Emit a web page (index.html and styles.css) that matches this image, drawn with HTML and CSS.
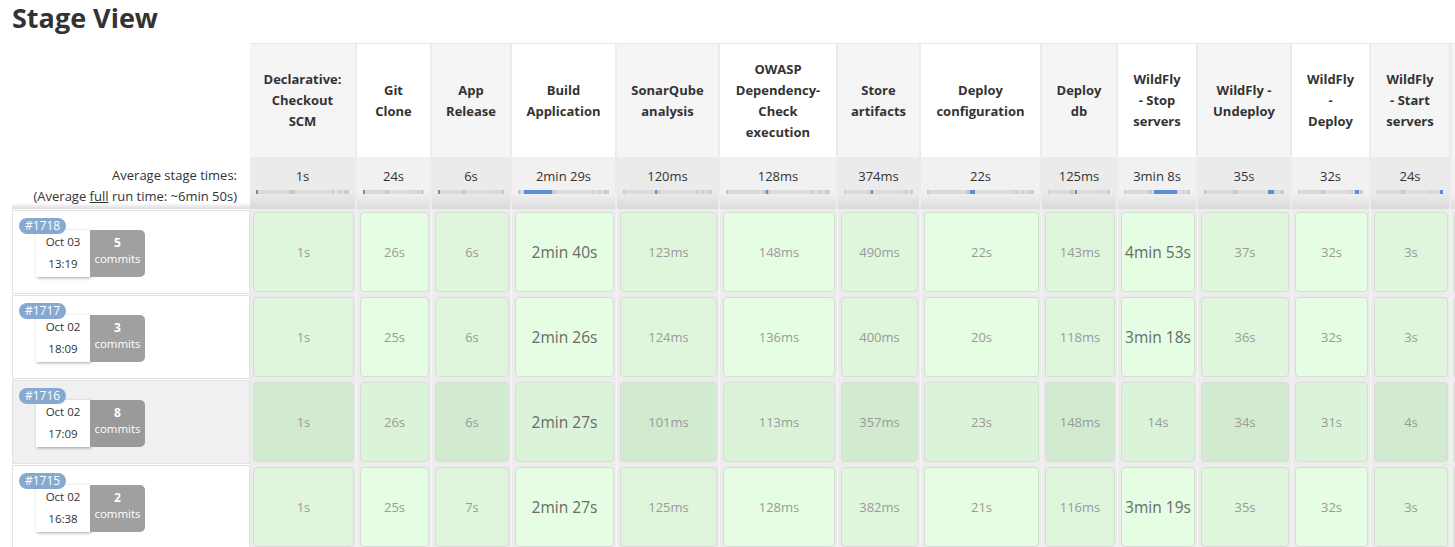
FILE: index.html
```html
<!DOCTYPE html>
<html>
<head>
<meta charset="utf-8">
<title>Stage View</title>
<link rel="stylesheet" href="styles.css">
</head>
<body>
<div class="page">
  <h1 class="title">Stage View</h1>
  <div class="table">
    <div class="row head">
      <div class="lead"></div>
      <div class="sh odd"><span>Declarative:<br>Checkout<br>SCM</span></div>
      <div class="sh even"><span>Git<br>Clone</span></div>
      <div class="sh odd"><span>App<br>Release</span></div>
      <div class="sh even"><span>Build<br>Application</span></div>
      <div class="sh odd"><span>SonarQube<br>analysis</span></div>
      <div class="sh even"><span>OWASP<br>Dependency-<br>Check<br>execution</span></div>
      <div class="sh odd"><span>Store<br>artifacts</span></div>
      <div class="sh even"><span>Deploy<br>configuration</span></div>
      <div class="sh odd"><span>Deploy<br>db</span></div>
      <div class="sh even"><span>WildFly<br>- Stop<br>servers</span></div>
      <div class="sh odd"><span>WildFly -<br>Undeploy</span></div>
      <div class="sh even"><span>WildFly<br>-<br>Deploy</span></div>
      <div class="sh odd"><span>WildFly<br>- Start<br>servers</span></div>
      <div class="sh even edge"></div>
    </div>
    <div class="row avg">
      <div class="lead avg-lead">Average stage times:<br>(Average <a class="full" href="#">full</a> run time: ~6min 50s)</div>
      <div class="av odd"><div class="avt">1s</div><div class="bar"><i style="margin-left:0%;width:1.5%"></i></div></div>
      <div class="av even"><div class="avt">24s</div><div class="bar"><i style="margin-left:0%;width:4%"></i></div></div>
      <div class="av odd"><div class="avt">6s</div><div class="bar"><i style="margin-left:0%;width:1.5%"></i></div></div>
      <div class="av even"><div class="avt">2min 29s</div><div class="bar"><i style="margin-left:7%;width:30%"></i></div></div>
      <div class="av odd"><div class="avt">120ms</div><div class="bar"><i style="margin-left:36%;width:1%"></i></div></div>
      <div class="av even"><div class="avt">128ms</div><div class="bar"><i style="margin-left:38%;width:1%"></i></div></div>
      <div class="av odd"><div class="avt">374ms</div><div class="bar"><i style="margin-left:39%;width:1.5%"></i></div></div>
      <div class="av even"><div class="avt">22s</div><div class="bar"><i style="margin-left:40%;width:5%"></i></div></div>
      <div class="av odd"><div class="avt">125ms</div><div class="bar"><i style="margin-left:43%;width:1%"></i></div></div>
      <div class="av even"><div class="avt">3min 8s</div><div class="bar"><i style="margin-left:46%;width:34%"></i></div></div>
      <div class="av odd"><div class="avt">35s</div><div class="bar"><i style="margin-left:80%;width:7%"></i></div></div>
      <div class="av even"><div class="avt">32s</div><div class="bar"><i style="margin-left:88%;width:6%"></i></div></div>
      <div class="av odd"><div class="avt">24s</div><div class="bar"><i style="margin-left:95%;width:5%"></i></div></div>
      <div class="av even edge"></div>
    </div>

    <div class="row build">
      <div class="lead info">
        <span class="badge">#1718</span>
        <div class="meta">
          <div class="date">Oct 03<br>13:19</div>
          <div class="commits"><b>5</b><br>commits</div>
        </div>
      </div>
      <div class="sc odd"><div class="box">1s</div></div>
      <div class="sc even"><div class="box">26s</div></div>
      <div class="sc odd"><div class="box">6s</div></div>
      <div class="sc even"><div class="box big">2min 40s</div></div>
      <div class="sc odd"><div class="box">123ms</div></div>
      <div class="sc even"><div class="box">148ms</div></div>
      <div class="sc odd"><div class="box">490ms</div></div>
      <div class="sc even"><div class="box">22s</div></div>
      <div class="sc odd"><div class="box">143ms</div></div>
      <div class="sc even"><div class="box big">4min 53s</div></div>
      <div class="sc odd"><div class="box">37s</div></div>
      <div class="sc even"><div class="box">32s</div></div>
      <div class="sc odd"><div class="box">3s</div></div>
      <div class="sc even edge"><div class="box"></div></div>
    </div>

    <div class="row build">
      <div class="lead info">
        <span class="badge">#1717</span>
        <div class="meta">
          <div class="date">Oct 02<br>18:09</div>
          <div class="commits"><b>3</b><br>commits</div>
        </div>
      </div>
      <div class="sc odd"><div class="box">1s</div></div>
      <div class="sc even"><div class="box">25s</div></div>
      <div class="sc odd"><div class="box">6s</div></div>
      <div class="sc even"><div class="box big">2min 26s</div></div>
      <div class="sc odd"><div class="box">124ms</div></div>
      <div class="sc even"><div class="box">136ms</div></div>
      <div class="sc odd"><div class="box">400ms</div></div>
      <div class="sc even"><div class="box">20s</div></div>
      <div class="sc odd"><div class="box">118ms</div></div>
      <div class="sc even"><div class="box big">3min 18s</div></div>
      <div class="sc odd"><div class="box">36s</div></div>
      <div class="sc even"><div class="box">32s</div></div>
      <div class="sc odd"><div class="box">3s</div></div>
      <div class="sc even edge"><div class="box"></div></div>
    </div>

    <div class="row build hot">
      <div class="lead info">
        <span class="badge">#1716</span>
        <div class="meta">
          <div class="date">Oct 02<br>17:09</div>
          <div class="commits"><b>8</b><br>commits</div>
        </div>
      </div>
      <div class="sc odd"><div class="box">1s</div></div>
      <div class="sc even"><div class="box">26s</div></div>
      <div class="sc odd"><div class="box">6s</div></div>
      <div class="sc even"><div class="box big">2min 27s</div></div>
      <div class="sc odd"><div class="box">101ms</div></div>
      <div class="sc even"><div class="box">113ms</div></div>
      <div class="sc odd"><div class="box">357ms</div></div>
      <div class="sc even"><div class="box">23s</div></div>
      <div class="sc odd"><div class="box">148ms</div></div>
      <div class="sc even"><div class="box">14s</div></div>
      <div class="sc odd"><div class="box">34s</div></div>
      <div class="sc even"><div class="box">31s</div></div>
      <div class="sc odd"><div class="box">4s</div></div>
      <div class="sc even edge"><div class="box"></div></div>
    </div>

    <div class="row build">
      <div class="lead info">
        <span class="badge">#1715</span>
        <div class="meta">
          <div class="date">Oct 02<br>16:38</div>
          <div class="commits"><b>2</b><br>commits</div>
        </div>
      </div>
      <div class="sc odd"><div class="box">1s</div></div>
      <div class="sc even"><div class="box">25s</div></div>
      <div class="sc odd"><div class="box">7s</div></div>
      <div class="sc even"><div class="box big">2min 27s</div></div>
      <div class="sc odd"><div class="box">125ms</div></div>
      <div class="sc even"><div class="box">128ms</div></div>
      <div class="sc odd"><div class="box">382ms</div></div>
      <div class="sc even"><div class="box">21s</div></div>
      <div class="sc odd"><div class="box">116ms</div></div>
      <div class="sc even"><div class="box big">3min 19s</div></div>
      <div class="sc odd"><div class="box">35s</div></div>
      <div class="sc even"><div class="box">32s</div></div>
      <div class="sc odd"><div class="box">3s</div></div>
      <div class="sc even edge"><div class="box"></div></div>
    </div>
  </div>
</div>
</body>
</html>
```

FILE: styles.css
```css
html, body {
  margin: 0;
  padding: 0;
  overflow: hidden;
  background: #fff;
}
body {
  font-family: "Open Sans", "Noto Sans", sans-serif;
  color: #333;
  width: 1455px;
  height: 547px;
}
.page {
  padding-left: 12px;
}
.title {
  margin: 0 0 7px 0;
  font-size: 27px;
  line-height: 36px;
  font-weight: 700;
  color: #333;
}
.table {
  display: flex;
  flex-direction: column;
  overflow: hidden;
}
.row {
  display: grid;
  grid-template-columns: 238px 107px 75px 80px 105px 103px 118px 83px 121px 76px 80px 94px 79px 80px 4px;
}
.head {
  height: 114px;
}
.sh {
  display: flex;
  align-items: center;
  justify-content: center;
  text-align: center;
  font-weight: 700;
  font-size: 13px;
  line-height: 21px;
  color: #333;
  border-top: 1px solid #e6e6e6;
  border-right: 2px solid #ececec;
  box-sizing: border-box;
}
.sh.odd { background: #f5f5f5; }
.sh.even { background: #fff; }
.sh.edge { border-right: 0; background: #f5f5f5; border-left: 1px solid #ececec; }

.avg {
  height: 52px;
}
.avg-lead {
  text-align: right;
  font-size: 13px;
  line-height: 21px;
  padding: 8px 13px 0 0;
  color: #333;
  box-sizing: border-box;
  background: linear-gradient(to bottom, #fff 0, #fff 46px, #f2f2f2 48px, #dcdcdc 52px);
}
.full {
  color: #333;
  text-decoration: underline;
}
.av {
  box-sizing: border-box;
  border-right: 2px solid #ececec;
  padding: 9px 6px 0 6px;
  text-align: center;
}
.av.odd { background: linear-gradient(to bottom, #ebebeb 0, #ebebeb 36px, #d9d9d9 52px); }
.av.even { background: linear-gradient(to bottom, #f1f1f1 0, #f1f1f1 36px, #dddddd 52px); }
.av.edge { border-right: 0; padding: 0; }
.avt {
  font-size: 13px;
  line-height: 20px;
  height: 20px;
  color: #333;
}
.bar {
  margin-top: 4px;
  height: 4px;
  display: flex;
  background:
    linear-gradient(to right,
      #c9c9c9 0, #c9c9c9 2%, #dadada 2%, #dadada 36%, #c9c9c9 36%, #c9c9c9 42%,
      #dcdcdc 42%, #dcdcdc 82%, #cccccc 82%, #cccccc 84%, #dcdcdc 84%, #dcdcdc 89%,
      #cccccc 89%, #cccccc 91%, #dcdcdc 91%, #dcdcdc 95%, #cccccc 95%, #cccccc 100%);
}
.bar i {
  display: block;
  height: 4px;
  min-width: 2px;
  background: #5b8dd6;
}

.build {
  height: 85px;
}
.lead.info {
  position: relative;
  box-sizing: border-box;
  height: 84px;
  margin-top: 1px;
  border: 1px solid #e2e2e2;
  background: #fff;
  padding: 19px 0 0 23px;
}
.hot .lead.info { background: #f0f0f0; }
.badge {
  position: absolute;
  left: 6px;
  top: 7px;
  height: 16px;
  line-height: 16px;
  padding: 0 6px;
  border-radius: 8px;
  background: #86a9d2;
  color: #fff;
  font-size: 12px;
  z-index: 2;
}
.meta {
  display: flex;
  height: 47px;
}
.date {
  width: 54px;
  height: 47px;
  box-sizing: border-box;
  background: #fff;
  box-shadow: 1px 1px 3px rgba(0,0,0,0.35);
  text-align: center;
  font-size: 11.5px;
  line-height: 22px;
  padding-top: 1px;
  color: #333;
}
.commits {
  width: 55px;
  height: 47px;
  box-sizing: border-box;
  background: #a0a0a0;
  border-radius: 0 5px 5px 0;
  text-align: center;
  color: #fff;
  font-size: 11.5px;
  line-height: 16px;
  padding-top: 5px;
}
.hot .commits { background: #9a9a9a; }
.commits b { font-weight: 700; font-size: 12px; }

.sc {
  box-sizing: border-box;
  background: #ececec;
  border-right: 1px solid #f6f6f6;
  padding: 3px 2px 2px 3px;
  min-width: 0;
  overflow: hidden;
}
.sc.edge { border-right: 0; padding-right: 0; }
.box {
  box-sizing: border-box;
  height: 100%;
  border: 1px solid #d3dfd1;
  border-radius: 4px;
  display: flex;
  align-items: center;
  justify-content: center;
  font-size: 13px;
  color: #9a9a9a;
}
.sc.edge .box { border-right: 0; border-radius: 4px 0 0 4px; }
.sc.odd .box { background: #dff6dc; }
.sc.even .box { background: #e5fde2; }
.hot .sc.odd .box { background: #d2eacf; }
.hot .sc.even .box { background: #dbf3d8; }
.box.big {
  font-size: 15.5px;
  color: #6a6a6a;
}
```
